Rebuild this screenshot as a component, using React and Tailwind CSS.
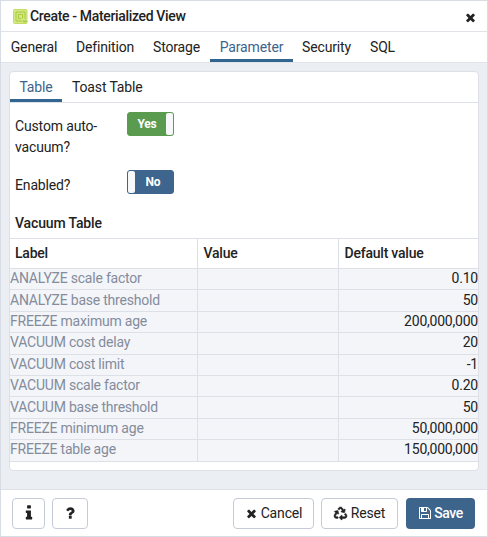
import React from "react";
import { FaRecycle } from "react-icons/fa";

const PATHS = {
  close:
    "M1490 1322q0 40-28 68l-136 136q-28 28-68 28t-68-28l-294-294-294 294q-28 28-68 28t-68-28l-136-136q-28-28-28-68t28-68l294-294-294-294q-28-28-28-68t28-68l136-136q28-28 68-28t68 28l294 294 294-294q28-28 68-28t68 28l136 136q28 28 28 68t-28 68l-294 294 294 294q28 28 28 68z",
  save:
    "M512 1536h768v-384h-768v384zm896 0h128v-896q0-14-10-38.5t-20-34.5l-281-281q-10-10-34-20t-39-10v416q0 40-28 68t-68 28h-576q-40 0-68-28t-28-68v-416h-128v1280h128v-416q0-40 28-68t68-28h832q40 0 68 28t28 68v416zm-384-928v-320q0-13-9.5-22.5t-22.5-9.5h-192q-13 0-22.5 9.5t-9.5 22.5v320q0 13 9.5 22.5t22.5 9.5h192q13 0 22.5-9.5t9.5-22.5zm640 32v928q0 40-28 68t-68 28h-1344q-40 0-68-28t-28-68v-1344q0-40 28-68t68-28h928q40 0 88 20t76 48l280 280q28 28 48 76t20 88z",
  info:
    "M1216 1344v128q0 26-19 45t-45 19h-512q-26 0-45-19t-19-45v-128q0-26 19-45t45-19h64v-384h-64q-26 0-45-19t-19-45v-128q0-26 19-45t45-19h384q26 0 45 19t19 45v576h64q26 0 45 19t19 45zm-128-1152v192q0 26-19 45t-45 19h-256q-26 0-45-19t-19-45v-192q0-26 19-45t45-19h256q26 0 45 19t19 45z",
  question:
    "M1088 1256v240q0 16-12 28t-28 12h-240q-16 0-28-12t-12-28v-240q0-16 12-28t28-12h240q16 0 28 12t12 28zm316-600q0 54-15.5 101t-35 76.5-55 59.5-57.5 43.5-61 35.5q-41 23-68.5 65t-27.5 67q0 17-12 32.5t-28 15.5h-240q-15 0-25.5-18.5t-10.5-37.5v-45q0-83 65-156.5t143-108.5q59-27 84-56t25-76q0-42-46.5-74t-107.5-32q-65 0-108 29-35 25-107 115-13 16-31 16-12 0-25-8l-164-125q-13-10-15.5-25t5.5-28q160-266 464-266 80 0 161 31t146 83 106 127.5 41 158.5z",
};

function Icon({ name, className }) {
  return (
    <svg viewBox="0 0 1792 1792" fill="currentColor" className={className} aria-hidden="true">
      <path d={PATHS[name]} />
    </svg>
  );
}

function ViewIcon() {
  return (
    <svg viewBox="0 0 15 15" className="h-[15px] w-[15px]" fill="none" aria-hidden="true">
      <rect x="0.5" y="0.5" width="13.5" height="14" rx="1" fill="#d3e884" stroke="#c3dd62" />
      <path d="M9 12H3V3h9v7" stroke="#a9c93c" strokeWidth="1" />
      <path d="M8 9.7H5.4V5.4h4.2v4.2" stroke="#a9c93c" strokeWidth="1" />
      <path d="M9.8 11.5l1.4 1.5 1.4-1.5 1.4 1.5" stroke="#a9c93c" strokeWidth="1.1" />
    </svg>
  );
}

const TABS = [
  ["General", "w-[66px]"],
  ["Definition", "w-[76px]"],
  ["Storage", "w-[67px]"],
  ["Parameter", "w-[83px]"],
  ["Security", "w-[67px]"],
  ["SQL", "w-[45px]"],
];

const ROWS = [
  ["ANALYZE scale factor", "0.10"],
  ["ANALYZE base threshold", "50"],
  ["FREEZE maximum age", "200,000,000"],
  ["VACUUM cost delay", "20"],
  ["VACUUM cost limit", "-1"],
  ["VACUUM scale factor", "0.20"],
  ["VACUUM base threshold", "50"],
  ["FREEZE minimum age", "50,000,000"],
  ["FREEZE table age", "150,000,000"],
];

function Switch({ on }) {
  return (
    <button
      className={
        "flex h-6 w-[47px] items-center rounded-[3px] border text-[12px] font-bold text-white " +
        (on ? "flex-row-reverse border-[#5a9b50] bg-[#5a9b50]" : "border-[#3d658d] bg-[#3d658d]")
      }
    >
      <span className="h-full w-[7px] shrink-0 rounded-[2px] bg-[#f6f8fa]" />
      <span className={"flex-1 text-center leading-none " + (on ? "" : "pr-[2px]")}>
        {on ? "Yes" : "No"}
      </span>
    </button>
  );
}

const BTN =
  "flex h-[31px] items-center justify-center rounded-[4px] border border-[#c6cbd8] bg-white";

export default function App() {
  return (
    <div className="flex h-[537px] w-[488px] flex-col overflow-hidden border border-[#d8dce4] bg-white font-['Roboto',sans-serif] text-[14px] tracking-[-0.15px] text-[#222]">
      <header className="flex h-[31px] shrink-0 items-center border-b border-[#e0e3e8] pr-[10px] pl-3">
        <ViewIcon />
        <h1 className="ml-[2px] font-medium tracking-[-0.34px]">Create - Materialized View</h1>
        <Icon name="close" className="mt-[2px] ml-auto h-[13px] w-[13px]" />
      </header>

      <nav className="flex h-[30px] shrink-0">
        {TABS.map(([label, width]) => (
          <div
            key={label}
            className={
              "flex justify-center border-b-[3px] pt-[5px] leading-[20px] whitespace-nowrap " +
              width +
              (label === "Parameter"
                ? " border-[#326690] text-[#3d648b]"
                : " border-transparent")
            }
          >
            {label}
          </div>
        ))}
      </nav>

      <main className="flex-1 border-t border-[#e0e3e8] bg-[#ebeef3] px-2 pt-2">
        <section className="flex h-[400px] flex-col overflow-hidden rounded-[4px] border border-[#dde0e6] bg-white">
          <nav className="flex h-[31px] shrink-0 border-b border-[#dde0e6]">
            <div className="w-[52px] border-b-[3px] border-[#326690] pt-[5px] text-center leading-[20px] text-[#3d648b]">
              Table
            </div>
            <div className="pt-[5px] pl-[10px] leading-[20px]">Toast Table</div>
          </nav>

          <div className="flex h-[61px] pt-[9px] pl-[5px]">
            <div className="w-[112px] pt-[4px] leading-[21px]">
              Custom auto-
              <br />
              vacuum?
            </div>
            <Switch on />
          </div>
          <div className="flex h-[44px] pt-[6px] pl-[5px]">
            <div className="w-[112px] pt-[5px] leading-[21px]">Enabled?</div>
            <Switch on={false} />
          </div>
          <div className="flex h-[30px] items-center pl-[5px] font-medium">Vacuum Table</div>

          <table className="-ml-px w-[469px] shrink-0 table-fixed border-collapse border-y border-[#dde0e6]">
            <colgroup>
              <col className="w-[188px]" />
              <col className="w-[141px]" />
              <col />
            </colgroup>
            <thead>
              <tr className="h-[30px] text-left tracking-[-0.22px]">
                <th className="border-r border-[#dde0e6] p-0 pl-[6px] font-medium">Label</th>
                <th className="border-r border-[#dde0e6] p-0 pl-[6px] font-medium">Value</th>
                <th className="p-0 pl-[6px] font-medium">Default value</th>
              </tr>
            </thead>
            <tbody className="bg-[#f3f5f9] tracking-[-0.22px]">
              {ROWS.map(([label, value]) => (
                <tr key={label} className="h-[21.4px] border-t border-[#dde0e6]">
                  <td className="border-r border-[#dde0e6] p-0 pb-px pl-px leading-[19px] text-[#848c9c]">
                    {label}
                  </td>
                  <td className="border-r border-[#dde0e6] p-0" />
                  <td className="p-0 pb-px text-right leading-[19px]">{value}</td>
                </tr>
              ))}
            </tbody>
          </table>
        </section>
      </main>

      <footer className="flex h-[47px] shrink-0 items-center border-t border-[#dde0e6] pr-3 pl-[11px]">
        <button className={BTN + " w-[33px]"}>
          <Icon name="info" className="h-[18px] w-[18px]" />
        </button>
        <button className={BTN + " ml-[7px] w-[36px]"}>
          <Icon name="question" className="h-4 w-4" />
        </button>
        <button className={BTN + " ml-auto w-[81px] gap-[3px]"}>
          <Icon name="close" className="h-[13px] w-[13px]" />
          Cancel
        </button>
        <button className={BTN + " ml-[7px] w-[77px] gap-[4px]"}>
          <FaRecycle className="h-[13px] w-[13px] overflow-visible" stroke="currentColor" strokeWidth="22" />
          Reset
        </button>
        <button className="ml-2 flex h-[31px] w-[69px] items-center justify-center gap-[2px] rounded-[4px] bg-[#3d648b] font-medium tracking-[-0.4px] text-white">
          <Icon name="save" className="h-[14px] w-[14px]" />
          Save
        </button>
      </footer>
    </div>
  );
}
